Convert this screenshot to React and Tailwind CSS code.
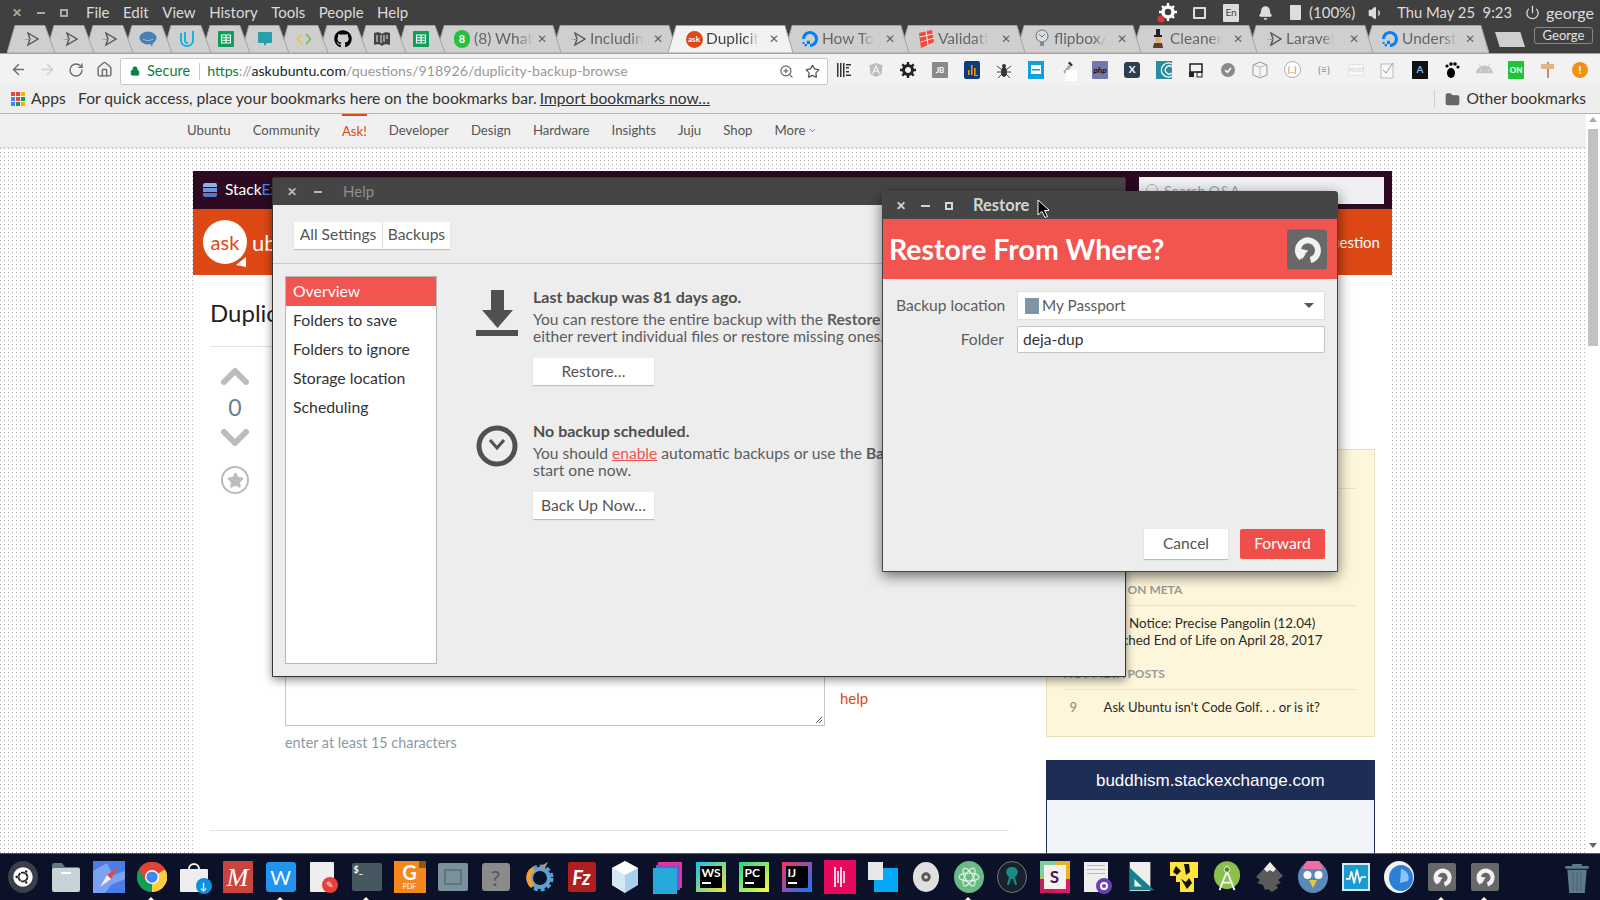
import React from 'react';
import { ArrowLeft, ArrowRight, RotateCw, Home, ZoomIn, Star, Lock, Folder, Bell, Power, Volume1, ChevronDown } from 'lucide-react';
import { FaGithub, FaUbuntu, FaAndroid, FaAngular } from 'react-icons/fa';
import { SiDigitalocean } from 'react-icons/si';

const menus = ['File', 'Edit', 'View', 'History', 'Tools', 'People', 'Help'];
const navLinks = ['Ubuntu', 'Community', 'Ask!', 'Developer', 'Design', 'Hardware', 'Insights', 'Juju', 'Shop'];
const helpRows = ['Folders to save', 'Folders to ignore', 'Storage location', 'Scheduling'];

// small favicons
const Plane = () => (
  <svg viewBox="0 0 16 16" className="w-4 h-4">
    <path d="M5 2 L15 8 L5 14 L7 8 Z" fill="none" stroke="#555" strokeWidth="1.4" />
    <path d="M0 9 L8 7.500 L8 9 Z" fill="#3fa9b5" />
  </svg>
);
const Sheets = () => (
  <svg viewBox="0 0 16 16" className="w-4 h-4">
    <rect width="16" height="16" rx="1" fill="#0f9d58" />
    <path d="M3.500 4h9v8h-9z M3.500 6.700h9 M3.500 9.300h9 M8 4v8" fill="none" stroke="#fff" strokeWidth="1.1" />
  </svg>
);
const Bubble = ({ color }) => (
  <svg viewBox="0 0 16 16" className="w-4 h-4">
    <path d="M2 1h12a1 1 0 0 1 1 1v9a1 1 0 0 1-1 1h-4l-3 3v-3H2a1 1 0 0 1-1-1V2a1 1 0 0 1 1-1z" fill={color} />
  </svg>
);
const Hipchat = () => (
  <svg viewBox="0 0 18 16" className="w-[18px] h-4">
    <ellipse cx="9" cy="7" rx="8.500" ry="6.500" fill="#4a7fb5" />
    <path d="M4 8c3 2 7 2 10 0" stroke="#9cc0dd" fill="none" />
    <path d="M11 12l2 4 1-5z" fill="#4a7fb5" />
  </svg>
);
const Udacity = () => (
  <svg viewBox="0 0 16 18" className="w-4 h-[18px]">
    <path d="M2 3v8c0 3 3 5 6 5s6-2 6-5V1M6 2v9c0 2 2 2 3 1.500" fill="none" stroke="#02b3e4" strokeWidth="1.8" />
  </svg>
);
const Diamond = () => (
  <svg viewBox="0 0 16 16" className="w-4 h-4">
    <path d="M6 3L1.500 8 6 13" fill="none" stroke="#e9c530" strokeWidth="1.5" />
    <path d="M10 3l4.500 5L10 13" fill="none" stroke="#6cc04a" strokeWidth="1.5" />
  </svg>
);
const Book = () => (
  <svg viewBox="0 0 18 16" className="w-[18px] h-4">
    <path d="M1 2c3-1 6-1 8 1 2-2 5-2 8-1v12c-3-1-6-1-8 1-2-2-5-2-8-1z" fill="#444" />
    <path d="M4 4v7M8 4v8M11 4v7M14 4v4" stroke="#eee" />
  </svg>
);
const WhatsApp = () => (
  <div className="w-4 h-[18px] rounded-full bg-[#25c13f] flex items-center justify-center text-white text-[11px] font-bold">8</div>
);
const AskIcon = () => (
  <div className="w-[17px] h-[17px] rounded-full bg-[#dd4814] flex items-center justify-center text-white text-[8px] font-bold">ask</div>
);
const Ocean = () => <SiDigitalocean className="w-4 h-4 text-[#0080ff]" />;
const RedFlag = () => (
  <svg viewBox="0 0 16 18" className="w-4 h-[18px]">
    <path d="M1 3l13-3 2 12-13 6z" fill="#f4483a" />
    <path d="M2 7l13-3M3 12l13-4M8 1l2 14" stroke="#fff" strokeWidth="0.9" />
  </svg>
);
const Bulb = () => (
  <svg viewBox="0 0 16 20" className="w-4 h-5">
    <circle cx="8" cy="7" r="6" fill="#d9dee3" stroke="#66727c" />
    <path d="M6 13h4v4H6z" fill="#888" />
    <path d="M5 5l3 3 3-3" stroke="#66727c" fill="none" />
  </svg>
);
const Cleaner = () => (
  <svg viewBox="0 0 14 20" className="w-[14px] h-5">
    <path d="M5 0h4v6H5zM3 6h8v2H3z" fill="#222" />
    <circle cx="7" cy="11" r="3" fill="#e0b070" />
    <path d="M3 14h8l1 5H2z" fill="#5a4020" />
  </svg>
);

const tabs = [
  { icon: <Plane /> }, { icon: <Plane /> }, { icon: <Plane /> }, { icon: <Hipchat /> }, { icon: <Udacity /> },
  { icon: <Sheets /> }, { icon: <Bubble color="#26a0ad" /> }, { icon: <Diamond /> },
  { icon: <FaGithub className="w-[18px] h-[18px] text-black" /> }, { icon: <Book /> }, { icon: <Sheets /> },
  { icon: <WhatsApp />, title: '(8) What' },
  { icon: <Plane />, title: 'Includin' },
  { icon: <AskIcon />, title: 'Duplicit', active: true },
  { icon: <Ocean />, title: 'How To' },
  { icon: <RedFlag />, title: 'Validati' },
  { icon: <Bulb />, title: 'flipbox/' },
  { icon: <Cleaner />, title: 'Cleaner' },
  { icon: <Plane />, title: 'Laravel' },
  { icon: <Ocean />, title: 'Underst' },
];

const Tile = ({ bg, color = '#fff', children, cls = '' }) => (
  <div className={`w-4 h-4 flex items-center justify-center text-[8px] font-bold rounded-[1px] ${cls}`} style={{ background: bg, color }}>
    {children}
  </div>
);

const extensions = [
  <svg viewBox="0 0 16 16" className="w-4 h-4"><path d="M1 1h1.500v14H1zM4 1h1.500v14H4zM7 1h1.500v14H7zM10 2h5v1.500h-5zM10 5h3v1.500h-3zM10 9h3v1.500h-3zM10 12.500h5V14h-5z" fill="#333" /></svg>,
  <FaAngular className="w-4 h-4 text-[#bdbdbd]" />,
  <svg viewBox="0 0 16 16" className="w-4 h-4"><circle cx="8" cy="8" r="4.500" fill="none" stroke="#222" strokeWidth="3" /><path d="M8 0v3M8 13v3M0 8h3M13 8h3M2.300 2.300l2 2M11.700 11.700l2 2M2.300 13.700l2-2M11.700 4.300l2-2" stroke="#222" strokeWidth="2.4" /></svg>,
  <Tile bg="#8a8a8a">JB</Tile>,
  <svg viewBox="0 0 16 18" className="w-4 h-[18px]"><rect width="16" height="18" rx="2" fill="#0b3d78" /><path d="M4 9h1.600v5H4zM7 4h1.600v10H7zM10 7h1.600v7H10zM10 14h4v1h-4z" fill="#f29111" /></svg>,
  <svg viewBox="0 0 16 18" className="w-4 h-[18px]"><ellipse cx="8" cy="11" rx="3" ry="5" fill="#333" /><circle cx="8" cy="5" r="2" fill="#333" /><path d="M1 5l5 4M15 5l-5 4M1 11h14M2 17l4-4M14 17l-4-4" stroke="#444" /></svg>,
  <svg viewBox="0 0 16 18" className="w-4 h-[18px]"><rect width="16" height="18" fill="#0fa0e0" /><rect x="3" y="4" width="10" height="9" fill="#fff" /><rect x="4" y="8" width="8" height="1.500" fill="#0fa0e0" /></svg>,
  <div className="relative w-4 h-5">
    <svg viewBox="0 0 16 20" className="w-4 h-4"><path d="M2 15L9 6l3 3-8 8z" fill="#aaa" /><path d="M10 2l4 4-2 2-4-4z" fill="#333" /></svg>
    <div className="absolute left-[6px] top-[10px] w-[11px] h-[11px] bg-white" />
  </div>,
  <Tile bg="#7377ad" color="#111" cls="italic !h-[18px]">php</Tile>,
  <Tile bg="#2c3e50" cls="rounded-[3px] text-[10px]">X</Tile>,
  <svg viewBox="0 0 16 18" className="w-4 h-[18px]"><rect width="16" height="18" fill="#2a8a9e" /><path d="M16 3A7 7 0 1 0 16 15M16 6a4 4 0 1 0 0 6" fill="none" stroke="#fff" strokeWidth="1.3" /></svg>,
  <svg viewBox="0 0 16 16" className="w-4 h-4"><path d="M2 2h12v8H2z" fill="none" stroke="#222" strokeWidth="1.5" /><rect x="1" y="10" width="5" height="5" fill="#222" /><rect x="9" y="10" width="5" height="5" fill="none" stroke="#222" /></svg>,
  <svg viewBox="0 0 16 16" className="w-4 h-4"><circle cx="8" cy="8" r="7" fill="#8a8a8a" /><path d="M5 8l2.400 2.400L11 6" stroke="#fff" strokeWidth="1.6" fill="none" /></svg>,
  <svg viewBox="0 0 16 18" className="w-4 h-[18px]"><path d="M8 1l7 3v10l-7 3-7-3V4z" fill="#f4f4f4" stroke="#999" /><path d="M8 6v11M1 4l7 2 7-2" stroke="#bbb" fill="none" /></svg>,
  <div className="w-[17px] h-[17px] rounded-full border border-[#aaa] bg-white flex items-center justify-center text-[8px] text-[#777]">{'{..}'}</div>,
  <span className="text-[10px] text-[#888]">{'{≡}'}</span>,
  <div className="w-4 h-3 bg-[#f7f7f7] border border-[#e4e4e4] text-[6px] text-[#ccc] text-center">POST</div>,
  <svg viewBox="0 0 16 18" className="w-4 h-[18px]"><rect x="1" y="3" width="12" height="14" fill="#f8f8f8" stroke="#bbb" /><path d="M3 9l3 3 7-10" stroke="#999" fill="none" /></svg>,
  <div className="w-4 h-[18px] bg-[#111] flex items-center justify-center text-[10px] font-bold text-[#7fb5e0]">A</div>,
  <svg viewBox="0 0 16 18" className="w-4 h-[18px]"><ellipse cx="7" cy="12" rx="4" ry="5" fill="#000" /><circle cx="3" cy="5" r="1.600" fill="#000" /><circle cx="7" cy="3" r="1.800" fill="#000" /><circle cx="11" cy="3" r="1.800" fill="#000" /><circle cx="14" cy="6" r="1.600" fill="#000" /></svg>,
  <FaAndroid className="w-[17px] h-[17px] text-[#c4c4c4]" />,
  <Tile bg="#1fc537" cls="!h-[18px] text-[7px]">ON</Tile>,
  <svg viewBox="0 0 16 18" className="w-4 h-[18px]"><path d="M7 1h2v16H7z" fill="#c98e5a" /><path d="M1 3h13v5H1z" fill="#e3b284" /></svg>,
  <div className="w-4 h-4 rounded-full bg-[#f29111] flex items-center justify-center text-white text-[12px] font-bold">!</div>,
];

const DejaDup = ({ className }) => (
  <svg viewBox="0 0 40 40" className={className}>
    <rect width="40" height="40" rx="3" fill="#686868" />
    <path d="M23.500 30.500 A10 10 0 1 0 14.500 28.500" fill="none" stroke="#f2f2f2" strokeWidth="6" />
    <path d="M12 19l9 2-6 9z" fill="#f2f2f2" />
    <path d="M19 23.500L22 29" stroke="#686868" strokeWidth="2" />
  </svg>
);

const dockIcons = [
  <div className="w-[30px] h-[32px] rounded-[50%] bg-[#3a3f4a] flex items-center justify-center"><div className="w-5 h-5 rounded-full bg-[#222] flex items-center justify-center"><FaUbuntu className="w-5 h-5 text-white" /></div></div>,
  <svg viewBox="0 0 30 30" className="w-[30px] h-[30px]"><path d="M1 3a2 2 0 0 1 2-2h8l3 4h13a2 2 0 0 1 2 2v4H1z" fill="#5f7a85" /><rect x="1" y="6" width="28" height="24" rx="2" fill="#c8d3d7" /><rect x="10" y="10" width="10" height="2" fill="#fff" /></svg>,
  <svg viewBox="0 0 32 32" className="w-8 h-8"><rect width="32" height="32" fill="#4a7de8" /><path d="M0 10l14-8 6 12 12-4v8l-14 6-6 8H0z" fill="#7ba2f0" /><path d="M25 6l-7 12-4-4z" fill="#e8493b" /><path d="M7 26l7-12 4 4z" fill="#eee" /></svg>,
  <svg viewBox="0 0 32 32" className="w-[30px] h-[30px]"><circle cx="16" cy="16" r="16" fill="#db4437" /><path d="M16 16L2.100 8A16 16 0 0 0 16 32z" fill="#0f9d58" /><path d="M16 16V32A16 16 0 0 0 30 8z" fill="#ffcd40" /><path d="M16 8h14A16 16 0 0 0 2.100 8L9 20z" fill="#db4437" /><circle cx="16" cy="16" r="7.500" fill="#fff" /><circle cx="16" cy="16" r="6" fill="#4285f4" /></svg>,
  <div className="relative w-[30px] h-[30px]"><div className="absolute left-0 top-[7px] w-[28px] h-[23px] bg-[#eeeeee] rounded-[1px]" /><div className="absolute left-[8px] top-[1px] w-3 h-2 border-2 border-[#eee] rounded-t-md" /><div className="absolute right-[-2px] bottom-[-2px] w-4 h-4 rounded-full bg-[#0c8fe0] flex items-center justify-center text-white text-[10px] font-bold">↓</div></div>,
  <div className="w-[30px] h-[32px] bg-[#c9443d] flex items-center justify-center text-white text-[26px] italic font-['Liberation_Serif',serif]">M</div>,
  <div className="w-[30px] h-[30px] rounded-[3px] bg-[#1f95f0] flex items-center justify-center text-white text-[20px]">W</div>,
  <div className="relative w-[24px] h-[30px] ml-[-4px] bg-[#eeeeee] rounded-[1px]"><div className="absolute right-[-4px] bottom-[-1px] w-4 h-4 rounded-full bg-[#e8413a] flex items-center justify-center text-white text-[9px]">✎</div></div>,
  <div className="w-[30px] h-[28px] rounded-[2px] bg-[#47575f] text-white text-[9px] font-bold pl-[2px] pt-[2px] leading-none">$_</div>,
  <div className="relative w-[32px] h-8 bg-[#f5871f] flex flex-col items-center text-white"><div className="absolute right-0 top-0 w-[7px] h-[7px] bg-[#8a5a10]" /><span className="text-[20px] font-bold leading-[22px]">G</span><span className="text-[7px] leading-none">PDF</span></div>,
  <div className="w-[30px] h-[28px] rounded-[2px] bg-[#7b919c] flex items-center justify-center"><div className="w-[18px] h-[16px] border-2 border-[#5f7480]" /></div>,
  <div className="w-[28px] h-[28px] rounded-[3px] bg-[#8b8b8b] flex items-center justify-center text-[#555] text-[22px]">?</div>,
  <svg viewBox="0 0 30 32" className="w-[30px] h-[32px]"><circle cx="16" cy="17" r="12" fill="none" stroke="#5ea0d0" strokeWidth="3" strokeDasharray="4 3" /><circle cx="16" cy="17" r="9" fill="none" stroke="#5ea0d0" strokeWidth="4" /><path d="M10 8A10 10 0 0 0 9 25" fill="none" stroke="#f0a030" strokeWidth="5" /><path d="M13 7L24 1 20 9z" fill="#999" /></svg>,
  <div className="w-[28px] h-[30px] rounded-[2px] bg-[#b01e1e] flex items-center justify-center text-white text-[20px] italic font-bold">Fz</div>,
  <svg viewBox="0 0 30 32" className="w-[30px] h-[32px]"><path d="M15 0l13 7v17l-13 8-13-8V7z" fill="#a9d0ee" /><path d="M15 14v18l-13-8V7z" fill="#d7e8f5" /><path d="M15 14L2 7l13-7 13 7z" fill="#fdfdfd" /></svg>,
  <div className="relative w-[30px] h-[30px]"><div className="absolute right-[1px] top-0 w-[24px] h-[26px] bg-[#e236a0]" /><div className="absolute left-[3px] top-[3px] w-[24px] h-[25px] bg-[#7c52d8]" /><div className="absolute left-0 top-[6px] w-[24px] h-[26px] bg-[#26a9d8]" /></div>,
  ...[['WS', '#12c2e9', '#f7e63a'], ['PC', '#21d789', '#fcf84a'], ['IJ', '#fe315d', '#087cfa']].map(([t, a, b]) => (
    <div className="w-[30px] h-[30px] flex items-center justify-center" style={{ background: `linear-gradient(135deg, ${a}, ${b})` }}>
      <div className="w-[22px] h-[22px] bg-black text-white text-[12px] font-bold leading-[13px] pl-[2px]">{t}<div className="w-[9px] h-[2px] mt-[3px] bg-white" /></div>
    </div>
  )),
  <div className="w-[32px] h-[34px] bg-[#e6095e] flex items-center justify-center gap-[1px]"><div className="w-[2px] h-5 bg-white/80" /><div className="w-[2px] h-3 bg-white/80" /><div className="w-[2px] h-5 bg-white/80" /><div className="w-[2px] h-3 bg-white/80" /></div>,
  <div className="relative w-[30px] h-[30px]"><div className="absolute right-0 bottom-0 w-[24px] h-[24px] bg-[#03a9f4]" /><div className="absolute left-0 top-0 w-[15px] h-[18px] bg-[#e8e8e8]" /></div>,
  <svg viewBox="0 0 30 32" className="w-[28px] h-[30px]"><ellipse cx="15" cy="16" rx="14" ry="16" fill="#e0e0e0" /><circle cx="15" cy="16" r="5" fill="#555" /><circle cx="15" cy="16" r="2" fill="#ddd" /></svg>,
  <svg viewBox="0 0 30 32" className="w-[30px] h-[32px]"><ellipse cx="15" cy="16" rx="15" ry="16" fill="#6aba85" /><g fill="none" stroke="#dff3e5" strokeWidth="1.2"><ellipse cx="15" cy="16" rx="10" ry="4" transform="rotate(60 15 16)" /><ellipse cx="15" cy="16" rx="10" ry="4" transform="rotate(-60 15 16)" /><ellipse cx="15" cy="16" rx="10" ry="4" /></g></svg>,
  <svg viewBox="0 0 30 32" className="w-[30px] h-[32px]"><ellipse cx="15" cy="16" rx="14.500" ry="15.500" fill="#17222c" stroke="#777" /><path d="M15 6c5 0 7 4 5 8l-2 2 2 8h-2l-2-6h-2l-2 6H10l2-8-2-2c-2-4 0-8 5-8z" fill="#1a8a84" /></svg>,
  <div className="relative w-[30px] h-[32px] overflow-hidden bg-[#e8b325]"><div className="absolute left-0 top-0 w-[15px] h-[16px] bg-[#7ecf9e]" /><div className="absolute left-0 bottom-0 w-[15px] h-[14px] bg-[#c51d5e]" /><div className="absolute right-0 bottom-0 w-[15px] h-[14px] bg-[#e01a6c]" /><div className="absolute inset-[4px] bg-[#f6f1f1] flex items-center justify-center text-[#4a154b] text-[17px] font-bold">S</div></div>,
  <div className="relative w-[24px] h-[30px] ml-[-4px] bg-[#eeeeee]"><div className="mx-[3px] mt-[3px] h-[1px] bg-[#bbb]" /><div className="mx-[3px] mt-[3px] h-[1px] bg-[#bbb]" /><div className="mx-[3px] mt-[3px] h-[1px] bg-[#bbb]" /><div className="absolute right-[-4px] bottom-[-2px] w-4 h-4 rounded-full bg-[#6d3fb5] border-[3px] border-[#6d3fb5] flex items-center justify-center"><div className="w-2 h-2 rounded-full border-2 border-white" /></div></div>,
  <svg viewBox="0 0 30 32" className="w-[30px] h-[30px]"><rect x="3" width="22" height="31" fill="#eee" /><path d="M3 6v24h26z" fill="#17808a" /><path d="M8 18v8h8z" fill="#eee" /></svg>,
  <svg viewBox="0 0 30 32" className="w-[30px] h-[32px]"><path d="M1 1h28v16h-4v14H11V21H7v-6H1z" fill="#ffe53b" /><path d="M7 5l5 5-4 4-4-3zM15 3h5l1 8-4 3zM12 18l5 3 3-4 3 5-5 6-3-5z" fill="#111" /></svg>,
  <svg viewBox="0 0 30 34" className="w-[28px] h-[34px]"><ellipse cx="15" cy="15" rx="14" ry="15" fill="#8ac249" /><path d="M15 5v6M15 11L7 31M15 11l8 20M9 23h12" stroke="#f5f5f5" strokeWidth="2" fill="none" /><circle cx="15" cy="9" r="3" fill="#5b7f31" stroke="#eee" /></svg>,
  <svg viewBox="0 0 30 32" className="w-[30px] h-[32px]"><path d="M15 1l13 14-5 4 3 3-5 2 2 3-6 4-4-3-3 1-2-5-6-2 3-3-4-3z" fill="#5a5a5a" /><path d="M15 1l6 7-3 3-3-2-3 2-3-3z" fill="#eee" /></svg>,
  <svg viewBox="0 0 30 32" className="w-[30px] h-[32px]"><ellipse cx="15" cy="16" rx="15" ry="16" fill="#5b8ab8" /><path d="M5 8a10 10 0 0 1 20 0z" fill="#f06ea0" /><circle cx="9.500" cy="14" r="4" fill="#fff" /><circle cx="20.500" cy="14" r="4" fill="#fff" /><path d="M11 19h8l-4 8z" fill="#f5c33b" /></svg>,
  <div className="w-[28px] h-[28px] bg-[#1b9ad1] border-2 border-[#cfe9f5] flex items-center justify-center"><svg viewBox="0 0 24 24" className="w-[22px] h-[22px]"><path d="M1 14h4l2-8 3 13 3-15 3 13 2-5h5" fill="none" stroke="#fff" strokeWidth="1.8" /></svg></div>,
  <svg viewBox="0 0 30 32" className="w-[30px] h-[32px]"><ellipse cx="15" cy="16" rx="15" ry="16" fill="#f2f2f2" /><ellipse cx="17" cy="17" rx="12" ry="13" fill="#2e7fd8" /><path d="M17 8a9 9 0 0 1 7 12l-8 2z" fill="#8cc4f5" /></svg>,
  <DejaDup className="w-[28px] h-[28px]" />,
  <DejaDup className="w-[28px] h-[28px]" />,
];

// running-app markers under some dock icons
const runningDock = [3, 6, 8, 22, 33, 34];

const ghostBtn = 'bg-white shadow-[0_1px_1px_rgba(0,0,0,0.2)] flex items-center justify-center text-[#555] text-[15.6px]';

const App = () => {
  return (
    <div className="relative w-[1600px] h-[900px] overflow-hidden flex flex-col bg-white text-[#333] font-['Lato',sans-serif]">
      {/* system top panel */}
      <div className="h-[25px] shrink-0 bg-[#404040] flex items-center text-[#dcdcdc] text-[15px] pr-[6px]">
        <span className="w-[86px] pl-[12px] flex items-center gap-[15px] text-[#aaa] text-[12px] font-bold">
          <span>✕</span>
          <span className="w-[8px] h-[2px] bg-[#aaa]" />
          <span className="w-[8px] h-[8px] border-2 border-[#aaa]" />
        </span>
        <div className="flex gap-[13.5px]">
          {menus.map(m => <span key={m}>{m}</span>)}
        </div>
        <div className="ml-auto flex items-center">
          <svg viewBox="0 0 20 20" className="w-5 h-5 mr-[16px]"><circle cx="11" cy="9" r="5" fill="none" stroke="#fff" strokeWidth="3.5" /><path d="M11 0v4M11 14v4M2 9h4M16 9h4M5 3l3 3M14 12l3 3M5 15l3-3M14 6l3-3" stroke="#fff" strokeWidth="2.4" /><circle cx="4" cy="16" r="3.500" fill="#e0323c" /></svg>
          <div className="w-[13px] h-[12px] border-2 border-[#ddd] rounded-[1px] mr-[17px]" />
          <div className="w-[16px] h-[18px] bg-[#ddd] rounded-[1px] text-[#444] text-[10px] flex items-center justify-center mr-[19px]">En</div>
          <Bell className="w-[15px] h-[16px] text-[#ddd] mr-[17px]" fill="#ddd" />
          <div className="w-[11px] h-[15px] bg-[#ddd] rounded-[1px] mr-[8px]" />
          <span className="mr-[13px]">(100%)</span>
          <Volume1 className="w-4 h-4 text-[#ddd] mr-[13px]" fill="#ddd" />
          <span className="mr-[13px] whitespace-pre text-[14.8px]">Thu May 25  9:23</span>
          <Power className="w-[15px] h-[15px] text-[#ddd] mr-[6px]" />
          <span className="text-[16px]">george</span>
        </div>
      </div>

      {/* tab strip */}
      <div className="relative h-[28px] shrink-0 bg-[#404040] flex pl-[7px]">
        {tabs.map((t, i) => (
          <div
            key={i}
            className={`relative h-[28px] shrink-0 mr-[-9px] flex items-center ${t.title ? 'w-[125px]' : 'w-[48px] justify-center'}`}
            style={{ zIndex: t.active ? 50 : 40 - i }}
          >
            <svg viewBox="0 0 100 28" preserveAspectRatio="none" className="absolute inset-0 w-full h-full">
              <path
                d={t.title ? 'M0 28 L6.500 0.500 L93.500 0.500 L100 28 Z' : 'M0 28 L16.500 0.500 L79 0.500 L100 28 Z'}
                fill={t.active ? '#f2f2f2' : '#cfcfcf'}
                stroke="#a3a3a3"
                vectorEffect="non-scaling-stroke"
              />
            </svg>
            {t.title ? (
              <div className="relative flex items-center w-full pl-[17px] pr-[14px]">
                <span className="w-[18px] flex justify-center shrink-0">{t.icon}</span>
                <span className={`ml-[3px] whitespace-nowrap text-[15.5px] [mask-image:linear-gradient(90deg,#000_75%,transparent)] ${t.active ? 'text-[#444]' : 'text-[#666]'}`}>{t.title}</span>
                <span className="ml-auto text-[12px] text-[#666]">✕</span>
              </div>
            ) : (
              <span className="relative">{t.icon}</span>
            )}
          </div>
        ))}
        <svg viewBox="0 0 32 16" className="w-[32px] h-[15px] ml-[14px] mt-[7px]"><path d="M0 0H27L32 16H5Z" fill="#cfcfcf" /></svg>
        <div className="absolute right-[7px] top-[2px] w-[59px] h-[17px] border border-[#888] rounded-[3px] text-[#e2e2e2] text-[13px] leading-[15px] text-center">George</div>
      </div>

      {/* omnibox row */}
      <div className="h-[32px] shrink-0 bg-[#f2f2f2] border-t border-[#a3a3a3] flex items-center">
        <div className="w-[120px] flex items-center pl-[10px] gap-[12px]">
          <ArrowLeft className="w-[17px] h-[17px] text-[#6b6b6b]" />
          <ArrowRight className="w-[17px] h-[17px] text-[#cfcfcf]" />
          <RotateCw className="w-[16px] h-[16px] text-[#6b6b6b]" />
          <Home className="w-[17px] h-[17px] text-[#6b6b6b]" />
        </div>
        <div className="w-[708px] h-[27px] mt-[3px] bg-white border border-[#c8c8c8] rounded-[2px] flex items-center text-[14.2px] pl-[9px] pr-[7px]">
          <Lock className="w-[10px] h-[12px] text-[#0b8043]" fill="#0b8043" />
          <span className="ml-[7px] text-[#0b8043] text-[14.5px]">Secure</span>
          <div className="w-px h-[17px] bg-[#ccc] ml-[9px] mr-[7px]" />
          <span className="whitespace-nowrap text-[#999]"><span className="text-[#0b8043]">https</span>://<span className="text-[#222]">askubuntu.com</span>/questions/918926/duplicity-backup-browse</span>
          <ZoomIn className="ml-auto w-[15px] h-[15px] text-[#666]" />
          <Star className="ml-[11px] w-[15px] h-[15px] text-[#555]" />
        </div>
        <div className="flex items-center">
          {extensions.map((e, i) => <div key={i} className="w-[32px] flex items-center justify-center">{e}</div>)}
        </div>
      </div>

      {/* bookmarks bar */}
      <div className="h-[29px] shrink-0 bg-[#eeeeee] border-b border-[#b5b5b5] flex items-center text-[15.6px] text-[#333]">
        <div className="ml-[11px] w-[14px] h-[14px] grid grid-cols-3 gap-[1px]">
          {['#e8453c', '#e8453c', '#f4b400', '#4285f4', '#e8453c', '#0f9d58', '#4285f4', '#0f9d58', '#f4b400'].map((c, i) => (
            <div key={i} style={{ background: c }} />
          ))}
        </div>
        <span className="ml-[6px] w-[47px]">Apps</span>
        <span className="whitespace-nowrap">For quick access, place your bookmarks here on the bookmarks bar.</span>
        <span className="ml-[3px] underline whitespace-nowrap">Import bookmarks now…</span>
        <div className="ml-auto h-[18px] w-px bg-[#ccc]" />
        <Folder className="ml-[10px] w-[15px] h-[15px] text-[#666]" fill="#666" />
        <span className="ml-[6px] mr-[14px]">Other bookmarks</span>
      </div>

      {/* page */}
      <div className="flex-1 min-h-0 flex">
        <div className="flex-1 min-w-0 flex flex-col">
          <div className="h-[34px] shrink-0 bg-[#f0f0f0] border-b border-[#dddddd] flex pl-[187px] gap-[22px] text-[13.2px] text-[#555]">
            {navLinks.map(l => (
              <span key={l} className={`h-full flex items-center ${l === 'Ask!' ? 'border-t-2 border-[#dd4814] text-[#dd4814]' : ''}`}>{l}</span>
            ))}
            <span className="flex items-center gap-[2px]">More <ChevronDown className="w-[9px] h-[9px]" /></span>
          </div>
          <div className="flex-1 min-h-0 pt-[23px] pl-[193px] bg-[conic-gradient(from_270deg_at_1px_1px,#b0b0b0_25%,transparent_25%)] bg-[length:4px_4px]">
            <div className="w-[1199px] h-full bg-white">
              <div className="h-[38px] bg-[#2d0922] flex items-center pl-[10px] pr-[8px]">
                <div className="w-[14px] flex flex-col gap-[1px]">
                  <div className="h-[4px] bg-[#8fb0e0] rounded-t-[2px]" />
                  <div className="h-[4px] bg-[#6f95d8]" />
                  <div className="h-[4px] bg-[#4f7ac8] rounded-b-[2px]" />
                </div>
                <span className="ml-[8px] text-white text-[15.5px]">Stack<span className="text-[#2f96e8]">Exchange</span></span>
                <div className="ml-auto w-[245px] h-[27px] bg-[#eef0f2] flex items-center pl-[7px] text-[#9aa0a6] text-[14px]">
                  <div className="w-[12px] h-[12px] rounded-full border border-[#aaa] mr-[6px]" />Search Q&A
                </div>
              </div>
              <div className="h-[66px] bg-[#dd4814] flex items-center pl-[10px] pr-[12px] text-white">
                <div className="relative w-[44px] h-[44px] rounded-full bg-white flex items-center justify-center text-[#dd4814] text-[20px]">
                  ask
                  <div className="absolute right-[1px] bottom-[-3px] w-[10px] h-[10px] bg-white [clip-path:polygon(100%_0,100%_100%,0_80%)]" />
                </div>
                <span className="ml-[5px] text-[22px]">ubuntu</span>
                <span className="ml-auto text-[15px]">Ask Question</span>
              </div>
              <div className="flex px-[17px]">
                <div className="w-[800px]">
                  <div className="h-[72px] border-b border-[#e2e2e2] pt-[20px] text-[24px] text-[#222]">Duplicity backup browse</div>
                  <div className="flex">
                    <div className="w-[75px] pt-[20px] pr-[25px] flex flex-col items-center text-[#bcbcbc]">
                      <svg viewBox="0 0 28 18" className="w-[28px] h-[18px]"><path d="M3 15L14 4l11 11" fill="none" stroke="#bcbcbc" strokeWidth="6" strokeLinecap="round" strokeLinejoin="round" /></svg>
                      <span className="text-[23px] leading-[44px] text-[#6a7e8f]">0</span>
                      <svg viewBox="0 0 28 18" className="w-[28px] h-[18px]"><path d="M3 3l11 11L25 3" fill="none" stroke="#bcbcbc" strokeWidth="6" strokeLinecap="round" strokeLinejoin="round" /></svg>
                      <div className="mt-[19px] w-[28px] h-[28px] rounded-full border-2 border-[#bcbcbc] flex items-center justify-center">
                        <Star className="w-[17px] h-[17px]" fill="#bcbcbc" />
                      </div>
                    </div>
                    <div className="flex-1">
                      <div className="flex pt-[253px]">
                        <div className="relative w-[540px] h-[126px] border border-[#c4c4c4]">
                          <div className="absolute right-[2px] bottom-[2px] w-[7px] h-[7px] bg-[linear-gradient(135deg,transparent_50%,#555_50%,#555_60%,transparent_60%,transparent_75%,#555_75%,#555_85%,transparent_85%)]" />
                        </div>
                        <span className="ml-[15px] mt-[87px] text-[15px] text-[#dd4814]">help</span>
                      </div>
                      <div className="mt-[6px] text-[14.4px] text-[#8a9aa8]">enter at least 15 characters</div>
                    </div>
                  </div>
                  <div className="mt-[76px] border-t border-[#e2e2e2]" />
                </div>
                <div className="ml-[37px] w-[330px] pt-[174px]">
                  <div className="h-[288px] bg-[#fdf6da] border border-[#e8e0b8] px-[17px] pt-[38px] text-[13.1px] text-[#2a2a2a]">
                    <div className="border-b border-[#ece3c0] h-0" />
                    <div className="mt-[92px] pb-[6px] border-b border-[#ece3c0] text-[12px] font-bold text-[#9a9a9a]">FEATURED ON META</div>
                    <div className="mt-[9px] pl-[20px] leading-[17px] whitespace-nowrap text-[13.4px]">Official Notice: Precise Pangolin (12.04)<br /><span className="ml-[20px]">reached End of Life on April 28, 2017</span></div>
                    <div className="mt-[16px] pb-[6px] border-b border-[#ece3c0] text-[12px] font-bold text-[#9a9a9a]">HOT META POSTS</div>
                    <div className="mt-[8px] flex"><span className="w-[40px] pl-[6px] text-[#888]">9</span><span>Ask Ubuntu isn't Code Golf. . . or is it?</span></div>
                  </div>
                  <div className="mt-[23px] h-[200px] bg-[#f1f5f9] border-x border-[#1e2d55]">
                    <div className="h-[40px] pt-[2px] bg-[#1e2d55] flex items-center justify-center text-white text-[17px] font-['Liberation_Sans',sans-serif]">buddhism.stackexchange.com</div>
                    <div className="mt-[45px] pl-[19px] text-[24px] text-[#2b6cb0]">Buddhism Stack</div>
                  </div>
                </div>
              </div>
            </div>
          </div>
        </div>
        {/* scrollbar */}
        <div className="w-[14px] shrink-0 bg-white flex flex-col items-center pt-[3px] pb-[5px]">
          <div className="w-0 h-0 border-x-[4px] border-x-transparent border-b-[5px] border-b-[#aaa]" />
          <div className="mt-[7px] w-[10px] h-[217px] bg-[#c2c2c2]" />
          <div className="mt-auto w-0 h-0 border-x-[4px] border-x-transparent border-t-[5px] border-t-[#666]" />
        </div>
      </div>

      {/* launcher */}
      <div className="h-[47px] shrink-0 bg-[#0b1128] border-t border-[#555b66] flex items-center pl-[1px] pr-[10px]">
        {dockIcons.map((ic, i) => (
          <div key={i} className="relative w-[43px] h-full flex items-center justify-center">
            {ic}
            {runningDock.includes(i) && <div className="absolute bottom-0 left-[18px] w-0 h-0 border-x-[3px] border-x-transparent border-b-[3px] border-b-white" />}
          </div>
        ))}
        <svg viewBox="0 0 26 32" className="ml-auto w-[26px] h-[31px]"><path d="M8 2h10v2H8zM1 4h24v3H1zM3 8h20l-2 24H5z" fill="#5d7a88" /><path d="M9 10v20M13 10v20M17 10v20" stroke="#4a6270" /></svg>
      </div>

      {/* Help window */}
      <div className="absolute left-[272px] top-[177px] w-[854px] h-[500px] bg-[#ededed] border border-[#333] rounded-t-[3px] shadow-[0_3px_10px_rgba(0,0,0,0.45)] flex flex-col">
        <div className="h-[27px] shrink-0 bg-[#454545] flex items-center text-[#8f8f8f] text-[15px]">
          <span className="w-[70px] pl-[14px] flex items-center gap-[17px] text-[12px] font-bold text-[#bbb]"><span>✕</span><span className="w-[8px] h-[2px] bg-[#bbb]" /></span>
          <span>Help</span>
        </div>
        <div className="h-[59px] pt-[2px] shrink-0 border-b border-[#c8c8c8] flex items-center pl-[21px]">
          <div className={`${ghostBtn} w-[88px] h-[27px]`}>All Settings</div>
          <div className={`${ghostBtn} ml-px w-[67px] h-[27px]`}>Backups</div>
        </div>
        <div className="flex-1 flex pl-[12px] pt-[12px] pb-[12px]">
          <div className="w-[152px] bg-white border border-[#b8b8b8] text-[15.8px] text-[#333]">
            <div className="h-[29px] pb-[2px] bg-[#f25450] text-white flex items-center pl-[7px]">Overview</div>
            {helpRows.map(r => <div key={r} className="h-[29px] pb-[2px] flex items-center pl-[7px]">{r}</div>)}
          </div>
          <div className="flex-1 pl-[39px] text-[15.6px] text-[#5c5c5c] leading-[17px]">
            <div className="flex pt-[12px]">
              <svg viewBox="0 0 42 46" className="w-[42px] h-[46px] shrink-0 mt-[2px]"><path d="M15 0h13v20h9L21.500 38 6 20h9z" fill="#505050" /><rect y="40" width="42" height="6" fill="#505050" /></svg>
              <div className="ml-[15px] whitespace-nowrap">
                <div className="font-bold text-[16px] text-[#4f4f4f]">Last backup was 81 days ago.</div>
                <div className="mt-[6px]">You can restore the entire backup with the <b>Restore</b> button or you can</div>
                <div>either revert individual files or restore missing ones.</div>
                <div className={`${ghostBtn} mt-[13px] w-[121px] h-[27px]`}>Restore…</div>
              </div>
            </div>
            <div className="flex mt-[37px]">
              <svg viewBox="0 0 42 42" className="w-[42px] h-[42px] shrink-0 mt-[3px]"><circle cx="21" cy="21" r="18" fill="none" stroke="#505050" strokeWidth="5" /><path d="M14 15l7 8 7-8" fill="none" stroke="#505050" strokeWidth="3" /></svg>
              <div className="ml-[15px] whitespace-nowrap">
                <div className="font-bold text-[16px] text-[#4f4f4f]">No backup scheduled.</div>
                <div className="mt-[6px]">You should <span className="text-[#f25450] underline">enable</span> automatic backups or use the <b>Back Up Now…</b> button to</div>
                <div>start one now.</div>
                <div className={`${ghostBtn} mt-[13px] w-[121px] h-[27px]`}>Back Up Now…</div>
              </div>
            </div>
          </div>
        </div>
      </div>

      {/* Restore window */}
      <div className="absolute left-[882px] top-[191px] w-[456px] h-[381px] bg-[#ededed] border border-[#444] rounded-t-[3px] shadow-[0_4px_14px_rgba(0,0,0,0.55)] flex flex-col">
        <div className="h-[27px] shrink-0 bg-[#454545] flex items-center text-[#d0d5d9] text-[16.5px] font-bold">
          <span className="w-[90px] pl-[13px] flex items-center gap-[15px] text-[12px]"><span>✕</span><span className="w-[9px] h-[2px] bg-[#d0d5d9]" /><span className="w-[8px] h-[8px] border-2 border-[#d0d5d9]" /></span>
          <span>Restore</span>
        </div>
        <div className="h-[60px] shrink-0 bg-[#f25450] flex items-center justify-between pl-[6px] pr-[10px] text-white text-[28.5px] font-bold">
          <span>Restore From Where?</span>
          <DejaDup className="w-[40px] h-[41px]" />
        </div>
        <div className="flex-1 flex flex-col pl-[13px] pr-[12px] pt-[12px] text-[15.6px] text-[#5c5c5c]">
          <div className="flex items-center h-[29px]">
            <span className="w-[108px] text-right whitespace-nowrap">Backup location</span>
            <div className="ml-[13px] flex-1 h-full bg-white border border-[#e0e0e0] flex items-center pl-[7px] pr-[10px] text-[15.3px]">
              <div className="w-[14px] h-[16px] bg-[#7f95a3] mr-[3px]" />
              My Passport
              <div className="ml-auto w-0 h-0 border-x-[5px] border-x-transparent border-t-[5px] border-t-[#555]" />
            </div>
          </div>
          <div className="flex items-center h-[27px] mt-[6px]">
            <span className="w-[108px] text-right">Folder</span>
            <div className="ml-[13px] flex-1 h-full bg-white border border-[#c4c4c4] rounded-[2px] flex items-center pl-[5px] text-[#333]">deja-dup</div>
          </div>
          <div className="mt-auto mb-[12px] flex justify-end gap-[12px]">
            <div className={`${ghostBtn} w-[84px] h-[30px]`}>Cancel</div>
            <div className="w-[85px] h-[30px] bg-[#ef4e4a] rounded-[2px] flex items-center justify-center text-white">Forward</div>
          </div>
        </div>
      </div>

      {/* mouse pointer */}
      <svg viewBox="0 0 12 20" className="absolute left-[1037px] top-[199px] w-[12px] h-[20px]">
        <path d="M1 1v15l4-3.500 3 6 2.500-1-3-6h5z" fill="#000" stroke="#fff" strokeWidth="1" />
      </svg>
    </div>
  );
};

export default App;
